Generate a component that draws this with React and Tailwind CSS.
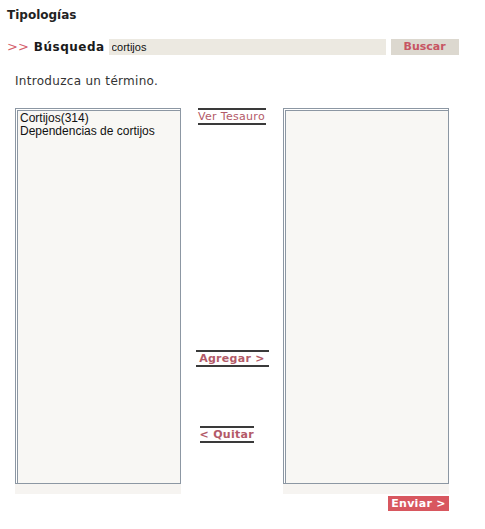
import { useState } from "react";

const verdana = "font-['DejaVu_Sans',Verdana,sans-serif]";
const arial = "font-['Liberation_Sans',Arial,sans-serif]";

function LinkButton({ children, bold, className = "" }) {
  return (
    <a
      href="#"
      className={`block whitespace-nowrap border-y-2 border-[#3a3a3a] text-center text-[11px] leading-[13px] tracking-[0.3px] text-[#b35a68] no-underline ${verdana} ${bold ? "font-bold" : ""} ${className}`}
    >
      {children}
    </a>
  );
}

function ListBox({ items = [] }) {
  return (
    <div className="flex w-[166px] flex-col">
      <div className="h-[376px] border border-[#8c97a3] bg-[#f8f7f4] shadow-[inset_1px_1px_0_#ffffff,inset_2px_2px_0_#8c97a3]">
        <ul className={`pl-[4px] pt-[3px] text-[12px] leading-[13px] text-[#111] ${arial}`}>
          {items.map((item) => (
            <li key={item}>{item}</li>
          ))}
        </ul>
      </div>
      <div className="h-[10px] bg-[#f6f4f1]" />
    </div>
  );
}

export default function App() {
  const [query, setQuery] = useState("cortijos");

  return (
    <div className="h-[529px] w-[485px] bg-white pl-[7px] pt-[8px]">
      <h1 className={`text-[12px] font-bold leading-[15px] text-[#222] ${verdana}`}>Tipologías</h1>

      <div className="mt-[16px] flex h-[16px] items-center">
        <span className={`text-[13px] leading-[16px] text-[#d4606c] ${verdana}`}>&gt;&gt;</span>
        <span className={`ml-[5px] text-[12px] font-bold leading-[16px] tracking-[0.5px] text-[#1a1a1a] ${verdana}`}>
          Búsqueda
        </span>
        <input
          value={query}
          onChange={(e) => setQuery(e.target.value)}
          className={`ml-[4px] h-[16px] w-[277px] bg-[#ece9e1] px-[3px] text-[11px] text-[#111] outline-none ${arial}`}
        />
        <button
          className={`ml-[5px] h-[16px] w-[68px] bg-[#dcd8cf] text-[11px] font-bold leading-[16px] text-[#c75563] ${verdana}`}
        >
          Buscar
        </button>
      </div>

      <p className={`ml-[8px] mt-[19px] text-[12px] leading-[14px] tracking-[0.3px] text-[#333] ${verdana}`}>
        Introduzca un término.
      </p>

      <div className="ml-[8px] mt-[20px] flex">
        <ListBox items={["Cortijos(314)", "Dependencias de cortijos"]} />
        <div className="flex w-[102px] flex-col items-center">
          <LinkButton className="ml-[-1px] w-[68px]">Ver Tesauro</LinkButton>
          <LinkButton bold className="mt-[225px] w-[73px]">
            Agregar &gt;
          </LinkButton>
          <LinkButton bold className="ml-[-11px] mt-[59px] w-[54px]">
            &lt; Quitar
          </LinkButton>
        </div>
        <ListBox />
      </div>

      <div className="mt-[2px] flex w-[442px] justify-end">
        <button
          className={`h-[15px] w-[61px] bg-[#d8575f] text-[11px] font-bold leading-[15px] tracking-[0.3px] text-white ${verdana}`}
        >
          Enviar &gt;
        </button>
      </div>
    </div>
  );
}
